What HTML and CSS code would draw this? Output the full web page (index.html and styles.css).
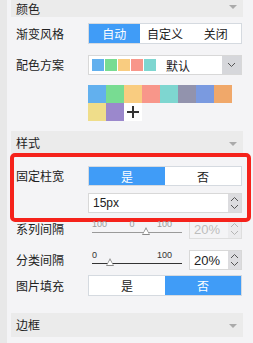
FILE: index.html
```html
<!DOCTYPE html>
<html lang="zh">
<head>
    <meta charset="UTF-8">
    <title>图表属性</title>
    <link rel="stylesheet" href="styles.css">
</head>
<body>
    <div class="sidebar">
        <div class="section-head first">颜色<span class="caret"></span></div>

        <div class="row">
            <div class="label">渐变风格</div>
            <div class="seg">
                <span class="on">自动</span><span>自定义</span><span>关闭</span>
            </div>
        </div>

        <div class="row gap-11">
            <div class="label">配色方案</div>
            <div class="select">
                <div class="swatches">
                    <i style="background:#62b0ee"></i><i style="background:#78dc92"></i><i style="background:#f9cc80"></i><i style="background:#f8968a"></i><i style="background:#7ed6d0"></i>
                </div>
                <span class="select-text">默认</span>
                <span class="select-btn">
                    <svg width="9" height="6" viewBox="0 0 9 6"><polyline points="1,1 4.5,4.5 8,1" fill="none" stroke="#555" stroke-width="1"/></svg>
                </span>
            </div>
        </div>

        <div class="palette">
            <i style="background:#62b0ee"></i><i style="background:#78dc92"></i><i style="background:#f9cc80"></i><i style="background:#f8968a"></i>
            <i style="background:#7ed6d0"></i><i style="background:#9293ad"></i><i style="background:#7a9ae0"></i><i style="background:#f0a86a"></i>
            <i style="background:#efdd8a"></i><i style="background:#9b88cc"></i>
            <i class="add">
                <svg width="18" height="18" viewBox="0 0 18 18"><rect x="3" y="8" width="12" height="2" fill="#333"/><rect x="8" y="3" width="2" height="12" fill="#333"/></svg>
            </i>
        </div>

        <div class="section-head">样式<span class="caret"></span></div>

        <div class="highlight">
            <div class="row">
                <div class="label top">固定柱宽</div>
                <div class="seg two h20">
                    <span class="on">是</span><span>否</span>
                </div>
            </div>
            <div class="row gap-7">
                <div class="label"></div>
                <div class="num wide">
                    <span class="num-val">15px</span>
                    <span class="spin">
                        <svg width="13" height="18" viewBox="0 0 13 18"><polyline points="3,7 6.5,3.5 10,7" fill="none" stroke="#555"/><polyline points="3,11 6.5,14.5 10,11" fill="none" stroke="#555"/></svg>
                    </span>
                </div>
            </div>
        </div>

        <div class="row gap-6">
            <div class="label">系列间隔</div>
            <div class="slider off">
                <div class="ticks"><span>100</span><span>0</span><span>100</span></div>
                <div class="track"></div>
                <span class="thumb" style="left:60%"></span>
            </div>
            <div class="num off">
                <span class="num-val">20%</span>
                <span class="spin">
                    <svg width="13" height="18" viewBox="0 0 13 18"><polyline points="3,7 6.5,3.5 10,7" fill="none" stroke="#b5b5b5"/><polyline points="3,11 6.5,14.5 10,11" fill="none" stroke="#b5b5b5"/></svg>
                </span>
            </div>
        </div>

        <div class="row gap-11">
            <div class="label">分类间隔</div>
            <div class="slider">
                <div class="ticks"><span>0</span><span>100</span></div>
                <div class="track"></div>
                <span class="thumb" style="left:20%"></span>
            </div>
            <div class="num">
                <span class="num-val">20%</span>
                <span class="spin">
                    <svg width="13" height="18" viewBox="0 0 13 18"><polyline points="3,7 6.5,3.5 10,7" fill="none" stroke="#555"/><polyline points="3,11 6.5,14.5 10,11" fill="none" stroke="#555"/></svg>
                </span>
            </div>
        </div>

        <div class="row gap-5">
            <div class="label">图片填充</div>
            <div class="seg two">
                <span>是</span><span class="on">否</span>
            </div>
        </div>

        <div class="section-head gap-17">边框<span class="caret"></span></div>
    </div>
</body>
</html>
```

FILE: styles.css
```css
body { margin: 0; background: #f4f4f6; font-family: "Noto Sans CJK SC", "Liberation Sans", sans-serif; font-size: 12px; color: #222; overflow: hidden; }
.sidebar { border-left: 7px solid #e8e8e8; padding: 0 10px 0 4px; min-height: 360px; }

.section-head { height: 24px; line-height: 24px; background: #ebebeb; padding-left: 5px; display: flex; justify-content: space-between; align-items: center; margin-top: 10px; }
.section-head.first { margin-top: 0; height: 17px; box-sizing: border-box; padding-top: 2px; line-height: 13px; align-items: flex-start; }
.section-head.first .caret { margin-top: 3px; }
.section-head.gap-17 { margin-top: 17px; }
.caret { width: 0; height: 0; border-left: 4px solid transparent; border-right: 4px solid transparent; border-top: 4px solid #aaa; margin-right: 6px; margin-top: 2px; }

.row { display: flex; align-items: center; padding-left: 5px; padding-right: 1px; margin-top: 6px; }
.gap-5 { margin-top: 5px; }
.gap-6 { margin-top: 6px; }
.gap-7 { margin-top: 7px; }
.gap-11 { margin-top: 11px; }
.label { width: 72px; flex-shrink: 0; line-height: 20px; }
.label.top { align-self: flex-start; }

.seg { flex: 1; display: flex; height: 21px; box-sizing: border-box; border: 1px solid #d5dae0; background: #fff; }
.seg.h20 { height: 20px; }
.seg span { flex: 1; display: flex; align-items: center; justify-content: center; }
.seg span.on { background: #409cf7; color: #fff; }

.select { flex: 1; display: flex; align-items: center; height: 20px; box-sizing: border-box; border: 1px solid #d8d8d8; background: #fff; }
.swatches { display: flex; gap: 1px; padding-left: 3px; }
.swatches i { width: 12px; height: 12px; display: block; }
.select-text { flex: 1; padding-left: 10px; }
.select-btn { width: 19px; height: 18px; background: #d6d7db; display: flex; align-items: center; justify-content: center; }

.palette { display: grid; grid-template-columns: repeat(8, 18px); margin: 10px 0 0 77px; }
.palette i { display: block; width: 18px; height: 18px; }
.palette .add { background: #fff; }
.palette svg { display: block; }

.highlight { position: relative; margin-top: 11px; }
.highlight::after { content: ""; position: absolute; top: -13px; left: -1px; right: -8px; bottom: -9px; border: 4px solid #f5221b; border-radius: 5px; pointer-events: none; }

.num { width: 53px; height: 20px; box-sizing: border-box; border: 1px solid #d8d8d8; background: #fff; display: flex; align-items: center; flex-shrink: 0; }
.num.wide { flex: 1; }
.num-val { flex: 1; padding-left: 4px; font-family: "Liberation Sans", sans-serif; font-size: 13px; }
.num.wide .num-val { font-size: 12px; }
.spin { width: 13px; height: 18px; background: #dcdcdf; }
.spin svg { display: block; }
.num.off { background: #f4f4f6; border-color: #dedede; }
.num.off .num-val { color: #bdbdbd; }
.num.off .spin { background: #ebebed; }

.slider { position: relative; width: 90px; height: 20px; margin: 0 7px 0 4px; font-family: "Liberation Sans", sans-serif; }
.ticks { display: flex; justify-content: space-between; padding-right: 10px; font-size: 9px; line-height: 9px; margin-top: 1px; color: #333; }
.track { position: absolute; left: 0; right: 0; top: 13px; height: 1px; background: #333; }
.thumb { position: absolute; top: 8px; width: 0; height: 0; margin-left: -4px; border-left: 4px solid transparent; border-right: 4px solid transparent; border-bottom: 8px solid #8a8a8a; }
.thumb::after { content: ""; position: absolute; left: -3px; top: 2px; border-left: 3px solid transparent; border-right: 3px solid transparent; border-bottom: 5px solid #fff; }
.slider.off .ticks { color: #9a9a9a; }
.slider.off .track { background: #9a9a9a; }
```
